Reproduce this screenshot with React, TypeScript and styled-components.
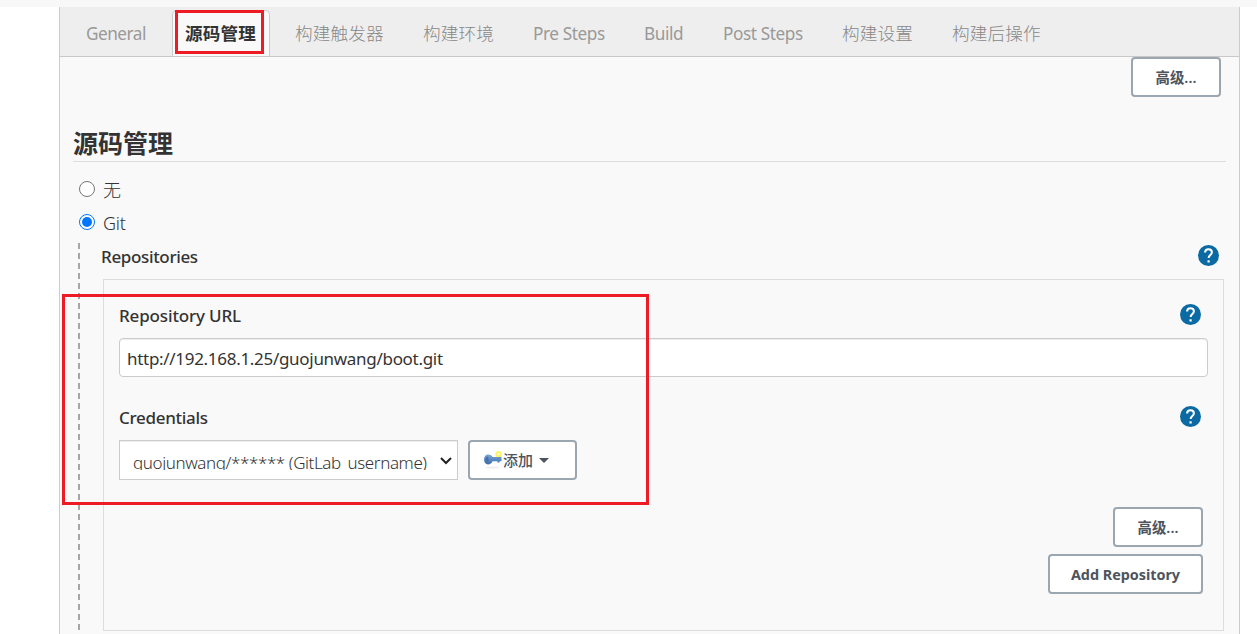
import React from 'react';
import styled, { createGlobalStyle } from 'styled-components';

const GlobalStyle = createGlobalStyle`
  * { box-sizing: border-box; }
  body {
    margin: 0;
    background: #fff;
    color: #333;
    font-family: 'Noto Sans', 'Noto Sans CJK SC', sans-serif;
    font-size: 17px;
  }
`;

const Page = styled.div`
  position: relative;
  height: 634px;
  overflow: hidden;
`;

const TopStrip = styled.div`
  height: 7px;
  background: #f8f8f8;
`;

const Panel = styled.main`
  width: 1181px;
  height: 627px;
  margin-left: 59px;
  border: solid #ccc;
  border-width: 0 1px;
  background: #f9f9f9;
`;

const TabBar = styled.nav`
  display: flex;
  align-items: flex-end;
  gap: 12px;
  height: 50px;
  padding-left: 13px;
  background: #eee;
  border-bottom: 1px solid #c8c8c8;
`;

const Tab = styled.div<{ $width: number; $active?: boolean; $spacing?: number }>`
  width: ${(p) => p.$width}px;
  height: 46px;
  padding-left: 12px;
  border: 1px solid ${(p) => (p.$active ? '#ccc' : 'transparent')};
  border-bottom: 0;
  border-radius: 5px 5px 0 0;
  background: ${(p) => (p.$active ? '#f9f9f9' : 'transparent')};
  color: ${(p) => (p.$active ? '#333' : '#999')};
  font-size: 17.6px;
  font-weight: ${(p) => (p.$active ? 700 : 400)};
  letter-spacing: ${(p) => p.$spacing ?? 0.15}px;
  line-height: 45px;
  white-space: nowrap;

  ${(p) => (p.$spacing !== undefined ? 'font-size: 17.2px;' : p.$active ? '' : 'font-weight: 300; color: #888;')}
`;

const Content = styled.div`
  padding: 0 13px;
`;

const ButtonRow = styled.div<{ $right: number; $top?: number }>`
  display: flex;
  justify-content: flex-end;
  margin-top: ${(p) => p.$top ?? 0}px;
  padding-right: ${(p) => p.$right}px;
`;

const Button = styled.button<{ $width: number; $lift?: boolean }>`
  display: flex;
  align-items: center;
  justify-content: center;
  width: ${(p) => p.$width}px;
  height: 40px;
  padding: 0 0 ${(p) => (p.$lift ? 2 : 0)}px;
  border: 2px solid #9aa6b0;
  border-radius: 4px;
  background: #fff;
  color: #4d545d;
  font-family: inherit;
  font-size: 14.4px;
  font-weight: ${(p) => (p.$lift ? 600 : 700)};
  letter-spacing: ${(p) => (p.$lift ? 0.1 : -0.02)}px;
  white-space: nowrap;
`;

const AddButton = styled(Button)`
  justify-content: flex-start;
  padding: 0 0 1px 13px;
  font-size: 15px;
  font-weight: 500;
`;

const Caret = styled.span`
  margin: 1px 0 0 6px;
  border: solid transparent;
  border-width: 5px 5.5px 0;
  border-top-color: #4d545d;
`;

const Heading = styled.h2`
  height: 40px;
  margin: 25px 0 0;
  border-bottom: 1px solid #ddd;
  font-size: 25px;
  font-weight: 700;
  line-height: 42px;
`;

const RadioRow = styled.label<{ $top: number }>`
  display: flex;
  align-items: center;
  gap: 8px;
  height: 24px;
  margin-top: ${(p) => p.$top}px;
  padding-left: 6px;
`;

const RadioDot = styled.span<{ $checked?: boolean }>`
  display: grid;
  place-items: center;
  width: 16px;
  height: 16px;
  border: 1px solid ${(p) => (p.$checked ? '#0075ff' : '#767676')};
  border-radius: 50%;
  background: #fff;

  &::after {
    content: '';
    width: 10px;
    height: 10px;
    border-radius: 50%;
    background: ${(p) => (p.$checked ? '#0075ff' : 'transparent')};
  }
`;

const RadioText = styled.span`
  font-size: 18px;
  font-weight: 300;
  line-height: 24px;
  letter-spacing: -0.2px;
  transform: translateY(1px);
`;

const Nested = styled.section`
  display: flex;
  margin-top: 9px;
  padding-left: 5px;
`;

const Guide = styled.div`
  width: 2px;
  height: 388px;
  background: repeating-linear-gradient(#a6a6a6 0 6px, transparent 6px 10.03px);
`;

const NestedBody = styled.div`
  flex: 1;
  padding: 0 2px 0 21px;
`;

const LabelRow = styled.div<{ $right: number }>`
  display: flex;
  align-items: center;
  justify-content: space-between;
  height: 26px;
  padding-right: ${(p) => p.$right}px;

  svg {
    margin-bottom: 2px;
  }
`;

const Label = styled.span<{ $spacing: number }>`
  font-size: 17px;
  font-weight: 500;
  letter-spacing: ${(p) => p.$spacing}px;
  line-height: 26px;
  transform: translateY(1px);
`;

const RepositoryBox = styled.div`
  height: 352px;
  margin: 10px 0 0 2px;
  padding: 22px 15px 0;
  border: 1px solid #ddd;
`;

const UrlField = styled.div`
  height: 39px;
  margin: 10px 0 27px;
  padding-left: 7px;
  border: 1px solid #ccc;
  border-radius: 4px;
  background: #fff;
  box-shadow: inset 0 1px 1px rgba(0, 0, 0, 0.075);
  font-size: 17px;
  letter-spacing: -0.3px;
  line-height: 39px;
`;

const CredentialsRow = styled.div`
  display: flex;
  gap: 10px;
  margin-top: 10px;
`;

const SelectField = styled.div`
  display: flex;
  justify-content: space-between;
  width: 339px;
  height: 40px;
  padding: 10px 5px 0 13px;
  border: 1px solid #ccc;
  background: #fff;
  box-shadow: inset 0 1px 1px rgba(0, 0, 0, 0.075);
`;

const SelectValue = styled.span`
  height: 19px;
  overflow: hidden;
  font-size: 17px;
  font-weight: 350;
  letter-spacing: -0.4px;
  line-height: 23px;
  white-space: nowrap;
`;

const Highlight = styled.div<{ $x: number; $y: number; $w: number; $h: number }>`
  position: absolute;
  left: ${(p) => p.$x}px;
  top: ${(p) => p.$y}px;
  width: ${(p) => p.$w}px;
  height: ${(p) => p.$h}px;
  border: 3px solid #ed1c24;
  pointer-events: none;
`;

const HelpIcon = () => (
  <svg width="21" height="21" viewBox="0 0 21 21">
    <circle cx="10.5" cy="10.5" r="10.5" fill="#0b6aa2" />
    <path d="M7.1 7.6C7.1 5.5 8.6 4.3 10.5 4.3s3.4 1.200 3.4 3.100c0 2.400-3.300 2.700-3.300 5.500" fill="none" stroke="#fff" strokeWidth="2" />
    <rect x="9.5" y="15.300" width="2.200" height="2.200" fill="#fff" />
  </svg>
);

const KeyIcon = () => (
  <svg width="20" height="18" viewBox="0 0 20 18">
    <defs>
      <linearGradient id="key" x1="0" y1="0" x2="0" y2="1">
        <stop offset="0" stopColor="#7ba6d6" />
        <stop offset="1" stopColor="#3d6eae" />
      </linearGradient>
    </defs>
    <ellipse cx="9.5" cy="16.5" rx="7" ry="1" fill="#eee" />
    <circle cx="15.5" cy="3.2" r="3.2" fill="#faf36a" />
    <circle cx="15.5" cy="3.2" r="1.2" fill="#fffcc0" />
    <path d="M5 3.5c2.4 0 3.8 1 4.6 2.6H18.5v4.2h-2v1.3h-2v-1.3H9.6C8.8 12.3 7.2 13.4 5 13.4 2.6 13.4 1 11.2 1 8.4S2.6 3.5 5 3.5z" fill="url(#key)" />
    <ellipse cx="4" cy="8.4" rx="1.6" ry="2.8" fill="#4672aa" />
  </svg>
);

const Chevron = () => (
  <svg width="12" height="20" viewBox="0 0 12 20">
    <path d="M1 7l5 5 5-5" fill="none" stroke="#222" strokeWidth="2" />
  </svg>
);

const tabs = [
  { text: 'General', width: 87, spacing: -0.5 },
  { text: '源码管理', width: 98, active: true },
  { text: '构建触发器', width: 116 },
  { text: '构建环境', width: 98 },
  { text: 'Pre Steps', width: 99, spacing: -0.4 },
  { text: 'Build', width: 67, spacing: -0.4 },
  { text: 'Post Steps', width: 107, spacing: -0.4 },
  { text: '构建设置', width: 98 },
  { text: '构建后操作', width: 116 },
];

export default function App() {
  return (
    <Page>
      <GlobalStyle />
      <TopStrip />
      <Panel>
        <TabBar>
          {tabs.map((t) => (
            <Tab key={t.text} $width={t.width} $active={t.active} $spacing={t.spacing}>
              {t.text}
            </Tab>
          ))}
        </TabBar>
        <Content>
          <ButtonRow $right={5}>
            <Button $width={90} $lift>高级...</Button>
          </ButtonRow>
          <Heading>源码管理</Heading>
          <RadioRow $top={15}>
            <RadioDot />
            <RadioText>无</RadioText>
          </RadioRow>
          <RadioRow $top={9}>
            <RadioDot $checked />
            <RadioText>Git</RadioText>
          </RadioRow>
          <Nested>
            <Guide />
            <NestedBody>
              <LabelRow $right={5}>
                <Label $spacing={-0.35}>Repositories</Label>
                <HelpIcon />
              </LabelRow>
              <RepositoryBox>
                <LabelRow $right={7}>
                  <Label $spacing={-0.15}>Repository URL</Label>
                  <HelpIcon />
                </LabelRow>
                <UrlField>http://192.168.1.25/guojunwang/boot.git</UrlField>
                <LabelRow $right={7}>
                  <Label $spacing={-0.3}>Credentials</Label>
                  <HelpIcon />
                </LabelRow>
                <CredentialsRow>
                  <SelectField>
                    <SelectValue>guojunwang/****** (GitLab_username)</SelectValue>
                    <Chevron />
                  </SelectField>
                  <AddButton $width={109}>
                    <KeyIcon />
                    添加
                    <Caret />
                  </AddButton>
                </CredentialsRow>
                <ButtonRow $right={5} $top={27}>
                  <Button $width={90} $lift>高级...</Button>
                </ButtonRow>
                <ButtonRow $right={5} $top={7}>
                  <Button $width={155}>Add Repository</Button>
                </ButtonRow>
              </RepositoryBox>
            </NestedBody>
          </Nested>
        </Content>
      </Panel>
      <Highlight $x={175} $y={10} $w={89} $h={44} />
      <Highlight $x={62} $y={294} $w={587} $h={211} />
    </Page>
  );
}
